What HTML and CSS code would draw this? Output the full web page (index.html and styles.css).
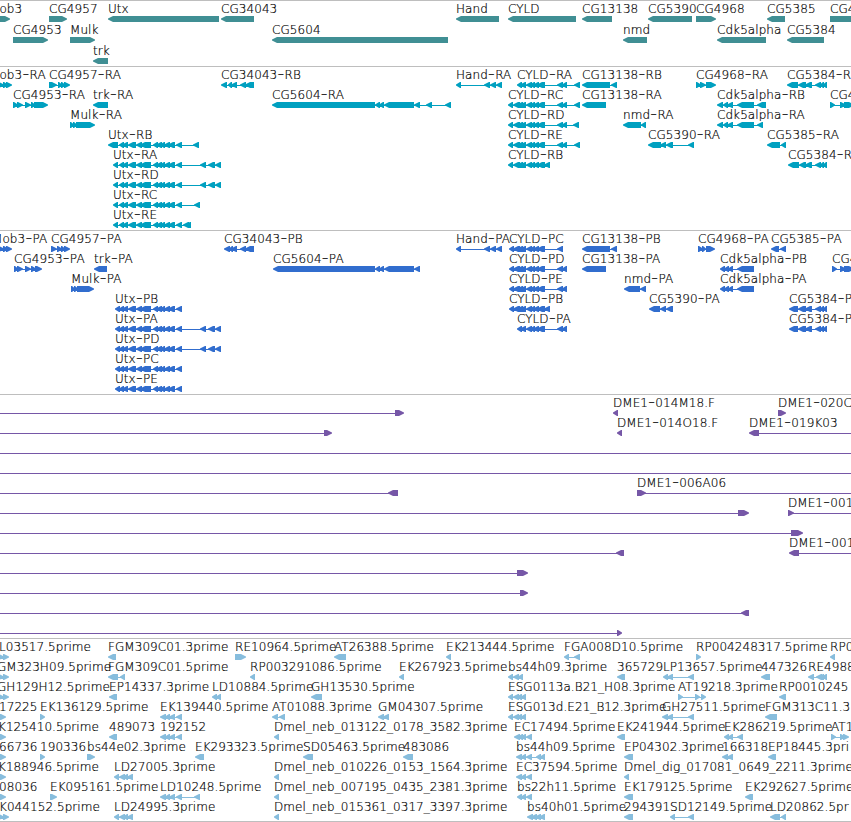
FILE: index.html
```html
<!DOCTYPE html>
<html lang="en">
<head>
    <meta charset="UTF-8">
    <meta name="viewport" content="width=device-width, initial-scale=1.0">
    <title>Genome Tracks</title>
    <link rel="stylesheet" href="styles.css">
</head>
<body>
    <div class="tracks">
        <svg class="track genes" id="genes"></svg>
        <svg class="track transcripts" id="transcripts"></svg>
        <svg class="track proteins" id="proteins"></svg>
        <svg class="track clones" id="clones"></svg>
        <svg class="track ests" id="ests"></svg>
    </div>
    <script src="tracks.js"></script>
</body>
</html>
```
FILE: styles.css
```css
body {
    margin: 0;
    background-color: #fff;
}

.tracks {
    display: flex;
    flex-direction: column;
    width: 851px;
    border-bottom: 1px solid #bebebe;
    overflow: hidden;
}

/* Each track is one band with a grey rule on top */
.track {
    display: block;
    box-sizing: border-box;
    width: 100%;
    border-top: 1px solid #bebebe;
    overflow: hidden;
}

.track text {
    font-family: "DejaVu Sans Light", "DejaVu Sans", sans-serif;
    font-size: 12px;
    font-weight: 200;
    letter-spacing: 0.06px;
    fill: #000;
    stroke: #000;
    stroke-width: 0.2px;
    white-space: pre;
}

.track .dash {
    font-size: 20px;
    stroke: none;
}

.genes {
    height: 66px;
    color: #408f94;
}

.transcripts {
    height: 164px;
    color: #00a0c0;
}

.proteins {
    height: 164px;
    color: #316dce;
}

.clones {
    height: 244px;
    color: #7657a7;
}

.ests {
    height: 183px;
    color: #87bddd;
}
```
FILE: tracks.js
```javascript
// row | label | label x | strand | exons | line start-end (optional)
const utx = "119-124 122-128 128-136 136-142 140-151 153-158 156-162 160-165 164-170 168-175 176-182";
const cyldA = "526-532 530-535 533-539 537-545";
const cyld5 = "513-520 517-523 520-526";

const genes = `
0|Mob3|-11|+|-12-10
0|CG4957|49|+|49-67
0|Utx|108|-|108-219
0|CG34043|221|-|221-254
0|Hand|456|-|456-499
0|CYLD|508|-|508-576
0|CG13138|582|-|582-612
0|CG5390|648|-|648-692
0|CG4968|696|+|696-716
0|CG5385|767|-|767-785
0|CG4|830|+|830-870
1|CG4953|13|+|13-48
1|Mulk|70|+|70-95
1|CG5604|272|-|272-448
1|nmd|623|-|623-647
1|Cdk5alpha|717|-|717-766
1|CG5384|787|-|787-824
2|trk|93|-|93-108`;

const transcripts = `
0|Mob3-RA|-11|+|-2-4 3-8 6-12
0|CG4957-RA|49|+|49-57 58-62 61-65 64-70
0|CG34043-RB|221|-|221-227 228-232 231-237 240-246 245-254
0|Hand-RA|456|-|456-461 484-490 490-496 496-502
0|CYLD-RA|517|-|517-522 520-526 ${cyldA} 557-563 562-567 574-580
0|CG13138-RB|582|-|582-610 611-617
0|CG4968-RA|696|+|696-701 700-706 706-716
0|CG5384-R|787|-|787-798 798-806 805-812 815-821 820-824 823-827
1|CG4953-RA|13|+|13-18 17-23 25-31 31-35 34-48
1|trk-RA|93|-|93-108
1|CG5604-RA|272|-|272-375 375-380 379-384 384-414 414-420 426-432 445-451
1|CYLD-RC|508|-|508-513 ${cyld5} ${cyldA} 557-563 562-567 574-580
1|CG13138-RA|582|-|582-606
1|Cdk5alpha-RB|717|-|717-723 723-728 727-733 737-754 757-766
1|CG4|830|+|830-835 840-846 844-854
2|Mulk-RA|70|+|70-74 73-77 76-95
2|CYLD-RD|508|-|508-513 ${cyld5} ${cyldA} 557-563 562-567 573-579
2|nmd-RA|623|-|623-641 641-646
2|Cdk5alpha-RA|717|-|717-723 723-728 727-733 737-754 757-763
3|Utx-RB|108|-|108-118 ${utx} 193-199
3|CYLD-RE|508|-|508-513 ${cyld5} ${cyldA} 557-563 562-567 574-580
3|CG5390-RA|648|-|648-661 660-666 666-673 688-694
3|CG5385-RA|767|-|767-780 781-786
4|Utx-RA|113|-|113-118 ${utx} 200-206 208-215 215-221
4|CYLD-RB|508|-|508-513 ${cyld5} ${cyldA} 544-550
4|CG5384-R|788|-|788-799 799-806 805-812 815-821 820-824 823-827
5|Utx-RD|113|-|113-118 ${utx} 200-206 208-215 215-221
6|Utx-RC|113|-|113-118 ${utx} 194-200
7|Utx-RE|113|-|113-118 ${utx} 183-189 185-191`;

const proteins = `
0|Mob3-PA|-8|+|-2-4 3-8 6-12
0|CG4957-PA|51|+|51-57 57-62 61-65 64-70
0|CG34043-PB|224|-|224-230 229-233 231-237 240-246 245-254
0|Hand-PA|456|-|456-461 484-490 490-496 496-502
0|CYLD-PC|509|-|509-514 ${cyld5} ${cyldA} 557-563
0|CG13138-PB|582|-|582-610 611-617
0|CG4968-PA|698|+|698-703 702-706 706-715
0|CG5385-PA|771|-|771-779 780-786
1|CG4953-PA|14|+|14-18 17-23 25-31 31-36 35-42
1|trk-PA|94|-|94-107
1|CG5604-PA|273|-|273-375 375-380 379-384 384-414 414-420
1|CYLD-PD|509|-|509-514 ${cyld5} ${cyldA} 557-563 562-567
1|CG13138-PA|582|-|582-606
1|Cdk5alpha-PB|720|-|720-725 724-729 728-733 737-754
1|CG4|832|+|832-837 840-846 844-854
2|Mulk-PA|71|+|71-75 74-78 77-94
2|CYLD-PE|509|-|509-514 ${cyld5} ${cyldA} 557-563 562-567
2|nmd-PA|624|-|624-640 640-646
2|Cdk5alpha-PA|720|-|720-725 724-729 728-733 737-754
3|Utx-PB|115|-|115-120 ${utx}
3|CYLD-PB|509|-|509-514 ${cyld5} ${cyldA} 544-550
3|CG5390-PA|649|-|649-660 660-666 666-673
3|CG5384-P|789|-|789-798 798-806 805-812 815-821 820-824 823-827
4|Utx-PA|115|-|115-120 ${utx} 200-206 208-215 215-221
4|CYLD-PA|517|-|517-522 520-526 ${cyldA} 557-563 562-567
4|CG5384-P|789|-|789-798 798-806 805-812 815-821 820-824 823-827
5|Utx-PD|115|-|115-120 ${utx} 200-206 208-215 215-221
6|Utx-PC|115|-|115-120 ${utx}
7|Utx-PE|115|-|115-120 ${utx}`;

const clones = `
0||0|+|395-404|0-400
0|DME1-014M18.F|613|-|613-618
0|DME1-020C|778|+|778-786
1||0|+|324-332|0-330
1|DME1-014O18.F|617|-|617-622
1|DME1-019K03|749|-|749-759|751-851
2||0|+||0-851
3||0|+||0-851
4||0|-|388-398|0-390
4|DME1-006A06|637|+|637-646|640-851
5||0|+|738-749|0-745
5|DME1-001|788|+|788-794|790-851
6||0|+|791-803|0-799
7||0|-|616-624|0-620
7|DME1-001|789|-|789-799|791-851
8||0|+|517-528|0-525
9||0|+|520-528|0-525
10||0|-|741-749|0-745
11||0|+|617-622|0-620`;

const ests = `
0|L03517.5prime|-1|+|-2-4 3-9
0|FGM309C01.3prime|108|-|108-116
0|RE10964.5prime|235|+|235-246
0|AT26388.5prime|334|-|334-346
0|EK213444.5prime|446|-|446-451
0|FGA008D10.5prime|564|-|564-569 574-580
0|RP004248317.5prime|696|+|696-701
0|RP0|830|-|830-835
1|GM323H09.5prime|-3|+|-2-4 3-9
1|FGM309C01.5prime|108|-|108-118 120-125
1|RP003291086.5prime|250|-|250-255
1|EK267923.5prime|399|-|399-404
1|bs44h09.3prime|508|-|508-513 513-519 518-523
1|365729|617|-|617-625
1|LP13657.5prime|663|-|663-668 667-673 688-694
1|447326|761|-|761-770
1|RE4988|808|-|808-814 816-822 819-824 822-827
2|GH129H12.5prime|-3|+|-2-4 3-9
2|EP14337.3prime|109|-|109-117
2|LD10884.5prime|212|-|212-217 216-221
2|GH13530.5prime|311|-|311-322
2|ESG0113a.B21_H08.3prime|508|-|508-513 513-519 517-522 521-526
2|AT19218.3prime|678|+|678-683 695-700 701-706
2|RP0010245|779|-|779-786
3|17225|-1|+|-4-2 0-6
3|EK136129.5prime|40|+|40-45
3|EK139440.5prime|160|-|160-166 165-170 169-175 176-182
3|AT01088.3prime|272|-|272-278 279-285
3|GM04307.5prime|378|-|378-384 383-389
3|ESG013d.E21_B12.3prime|508|-|508-513 513-519 517-522 521-526
3|GH27511.5prime|662|-|662-668 667-673 688-694
3|FGM313C11.3|765|-|765-777
4|K125410.5prime|-2|+|-4-2 0-6
4|489073|109|-|109-117
4|192152|160|-|160-166 165-170 169-175 176-182
4|Dmel_neb_013122_0178_3582.3prime|274|-|274-279
4|EC17494.5prime|514|-|514-520 518-523 521-526 526-532
4|EK241944.5prime|617|-|617-625
4|EK286219.5prime|724|-|724-729 728-733 737-743
4|AT1|831|+|831-836 840-845 843-849
5|66736|-1|+|-4-2 0-6
5|190336|40|+|40-45
5|bs44e02.3prime|87|+|87-95
5|EK293323.5prime|195|-|195-204
5|SD05463.5prime|303|-|303-313
5|483086|403|-|403-413
5|bs44h09.5prime|516|-|516-522 521-526 526-532 536-541 540-545
5|EP04302.3prime|624|-|624-633
5|166318|722|-|722-728 727-733
5|EP18445.3pri|768|-|768-776
6|K188946.5prime|-2|+|-4-2 0-6
6|LD27005.3prime|114|-|114-119 119-125 123-128 127-133
6|Dmel_neb_010226_0153_1564.3prime|274|-|274-279
6|EC37594.5prime|516|-|516-522 521-526 526-532
6|Dmel_dig_017081_0649_2211.3prime|624|-|624-629
7|08036|-1|+|-4-2 0-6
7|EK095161.5prime|50|+|50-57
7|LD10248.5prime|160|-|160-166 165-170 169-175 176-182 194-200
7|Dmel_neb_007195_0435_2381.3prime|274|-|274-279
7|bs22h11.5prime|517|-|517-522 521-526 526-532
7|EK179125.5prime|624|-|624-633
7|EK292627.5prime|745|-|745-753
8|K044152.5prime|-1|+|-2-4 3-9
8|LD24995.3prime|114|-|114-119 119-125 123-128 127-133
8|Dmel_neb_015361_0317_3397.3prime|274|-|274-279
8|bs40h01.5prime|527|-|527-533 531-537 535-541 539-545
8|294391|624|-|624-633
8|SD12149.5prime|670|-|670-675 688-694
8|LD20862.5pr|770|-|770-780 781-786`;

function parseRange(text) {
    const m = text.match(/^(-?\d+)-(\d+)$/);
    return [Number(m[1]), Number(m[2])];
}

// 6px high box with a pointed end on the strand side, always drawn clockwise
function exonPath(start, end, strand, y) {
    const head = Math.min(end - start, 6);
    if (strand === "+") {
        return `M${start} ${y}H${end - head + 1}L${end} ${y + 2.5}V${y + 3.5}L${end - head + 1} ${y + 6}H${start}Z`;
    }
    return `M${start + head - 1} ${y}H${end}V${y + 6}H${start + head - 1}L${start} ${y + 3.5}V${y + 2.5}Z`;
}

function drawTrack(id, data, pitch) {
    let markup = "";
    data.trim().split("\n").forEach(line => {
        const [row, label, x, strand, exonText, span] = line.split("|");
        const top = Number(row) * pitch + 15;
        const exons = exonText ? exonText.split(" ").map(parseRange) : [];
        const [from, to] = span ? parseRange(span) : [exons[0][0] + 2, exons[exons.length - 1][1] - 2];

        let d = `M${from} ${top + 3}H${to}V${top + 4}H${from}Z`;
        exons.forEach(([start, end]) => {
            d += exonPath(start, end, strand, top);
        });
        markup += `<path fill="currentColor" d="${d}"/>`;

        if (label) {
            const text = label.replace("-", '<tspan class="dash" dy="1">-</tspan><tspan dy="-1">') + (label.includes("-") ? "</tspan>" : "");
            markup += `<text x="${x}" y="${top - 3}">${text}</text>`;
        }
    });
    document.getElementById(id).innerHTML = markup;
}

drawTrack("genes", genes, 21);
drawTrack("transcripts", transcripts, 20);
drawTrack("proteins", proteins, 20);
drawTrack("clones", clones, 20);
drawTrack("ests", ests, 20);
```
